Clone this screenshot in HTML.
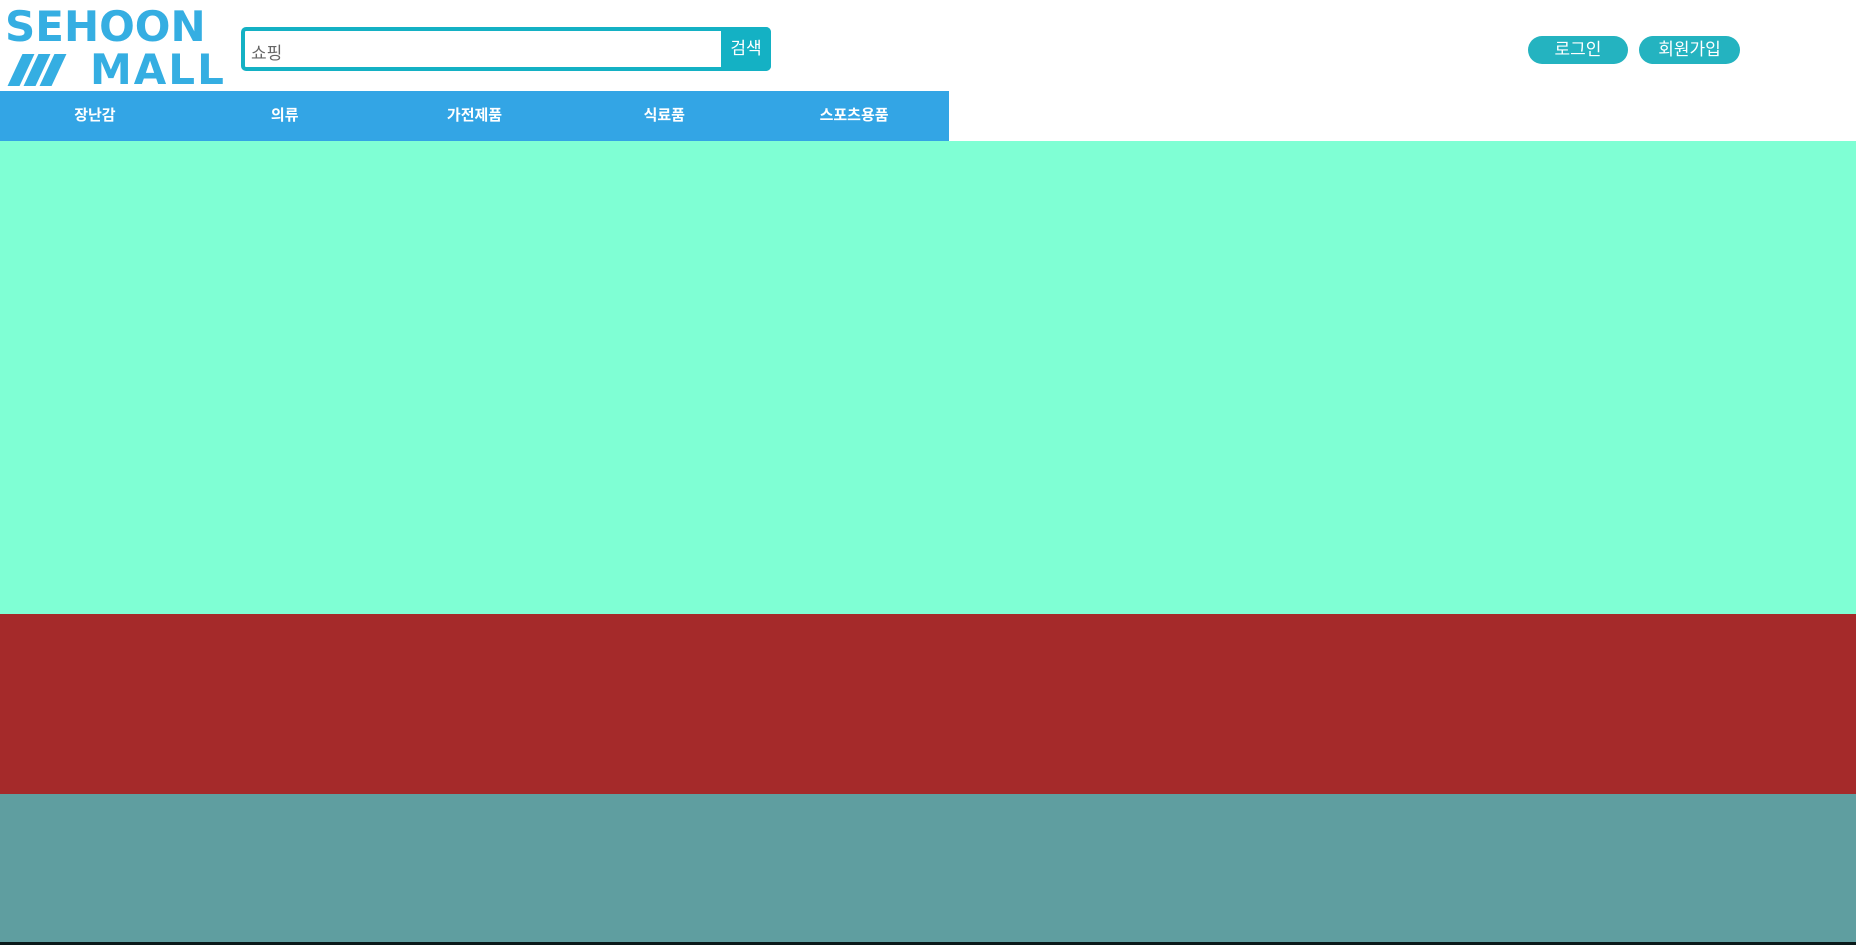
<!DOCTYPE html>
<html><head><meta charset="utf-8"><style>
*{margin:0;padding:0;box-sizing:border-box}
body{width:1856px;height:945px;overflow:hidden;background:#fff;font-family:"Liberation Sans","Noto Sans CJK KR",sans-serif;position:relative}
.logo{position:absolute;left:5px;top:4px;color:#35aee2;font-weight:bold;font-family:"DejaVu Sans","Liberation Sans",sans-serif}
.l1{position:absolute;left:0;top:2px;font-size:42px;letter-spacing:0px;line-height:42px;white-space:nowrap}
.l2{position:absolute;left:85px;top:46px;font-size:42px;letter-spacing:2px;line-height:40px;white-space:nowrap}
.sl{position:absolute;top:50px;width:12px;height:32px;background:#35aee2;transform:skewX(-25deg)}
.search{position:absolute;left:241px;top:27px;width:530px;height:44px;border:4px solid #14b1c4;border-radius:5px;background:#fff}
.search span{position:absolute;left:6px;top:8px;font-size:17px;color:#666}
.btn{position:absolute;right:-4px;top:-4px;width:50px;height:44px;background:#14b1c4;border-radius:0 5px 5px 0;color:#fff;font-size:17px;text-align:center;line-height:44px}
.nav{position:absolute;left:0;top:91px;width:949px;height:50px;background:#33a5e5;display:flex}
.nav div{width:190px;text-align:center;color:#fff;font-weight:bold;font-size:15px;line-height:50px}
.pill{position:absolute;top:36px;height:28px;width:100px;border-radius:14px;background:#24b3c0;color:#fff;font-size:17px;text-align:center;line-height:28px}
</style></head><body>
<div class="logo">
<div class="l1">SEHOON</div>
<div class="sl" style="left:10px"></div><div class="sl" style="left:26px"></div><div class="sl" style="left:42px"></div>
<div class="l2">MALL</div>
</div>
<div class="search"><span>쇼핑</span><div class="btn">검색</div></div>
<div class="pill" style="left:1528px">로그인</div>
<div class="pill" style="left:1639px;width:101px">회원가입</div>
<div class="nav"><div>장난감</div><div>의류</div><div>가전제품</div><div>식료품</div><div>스포츠용품</div></div>
<div style="position:absolute;left:0;top:141px;width:1856px;height:473px;background:#7fffd4"></div>
<div style="position:absolute;left:0;top:614px;width:1856px;height:180px;background:#a52a2a"></div>
<div style="position:absolute;left:0;top:794px;width:1856px;height:148px;background:#5f9ea0"></div>
<div style="position:absolute;left:0;top:942px;width:1856px;height:3px;background:#0a1a1a"></div>
</body></html>
